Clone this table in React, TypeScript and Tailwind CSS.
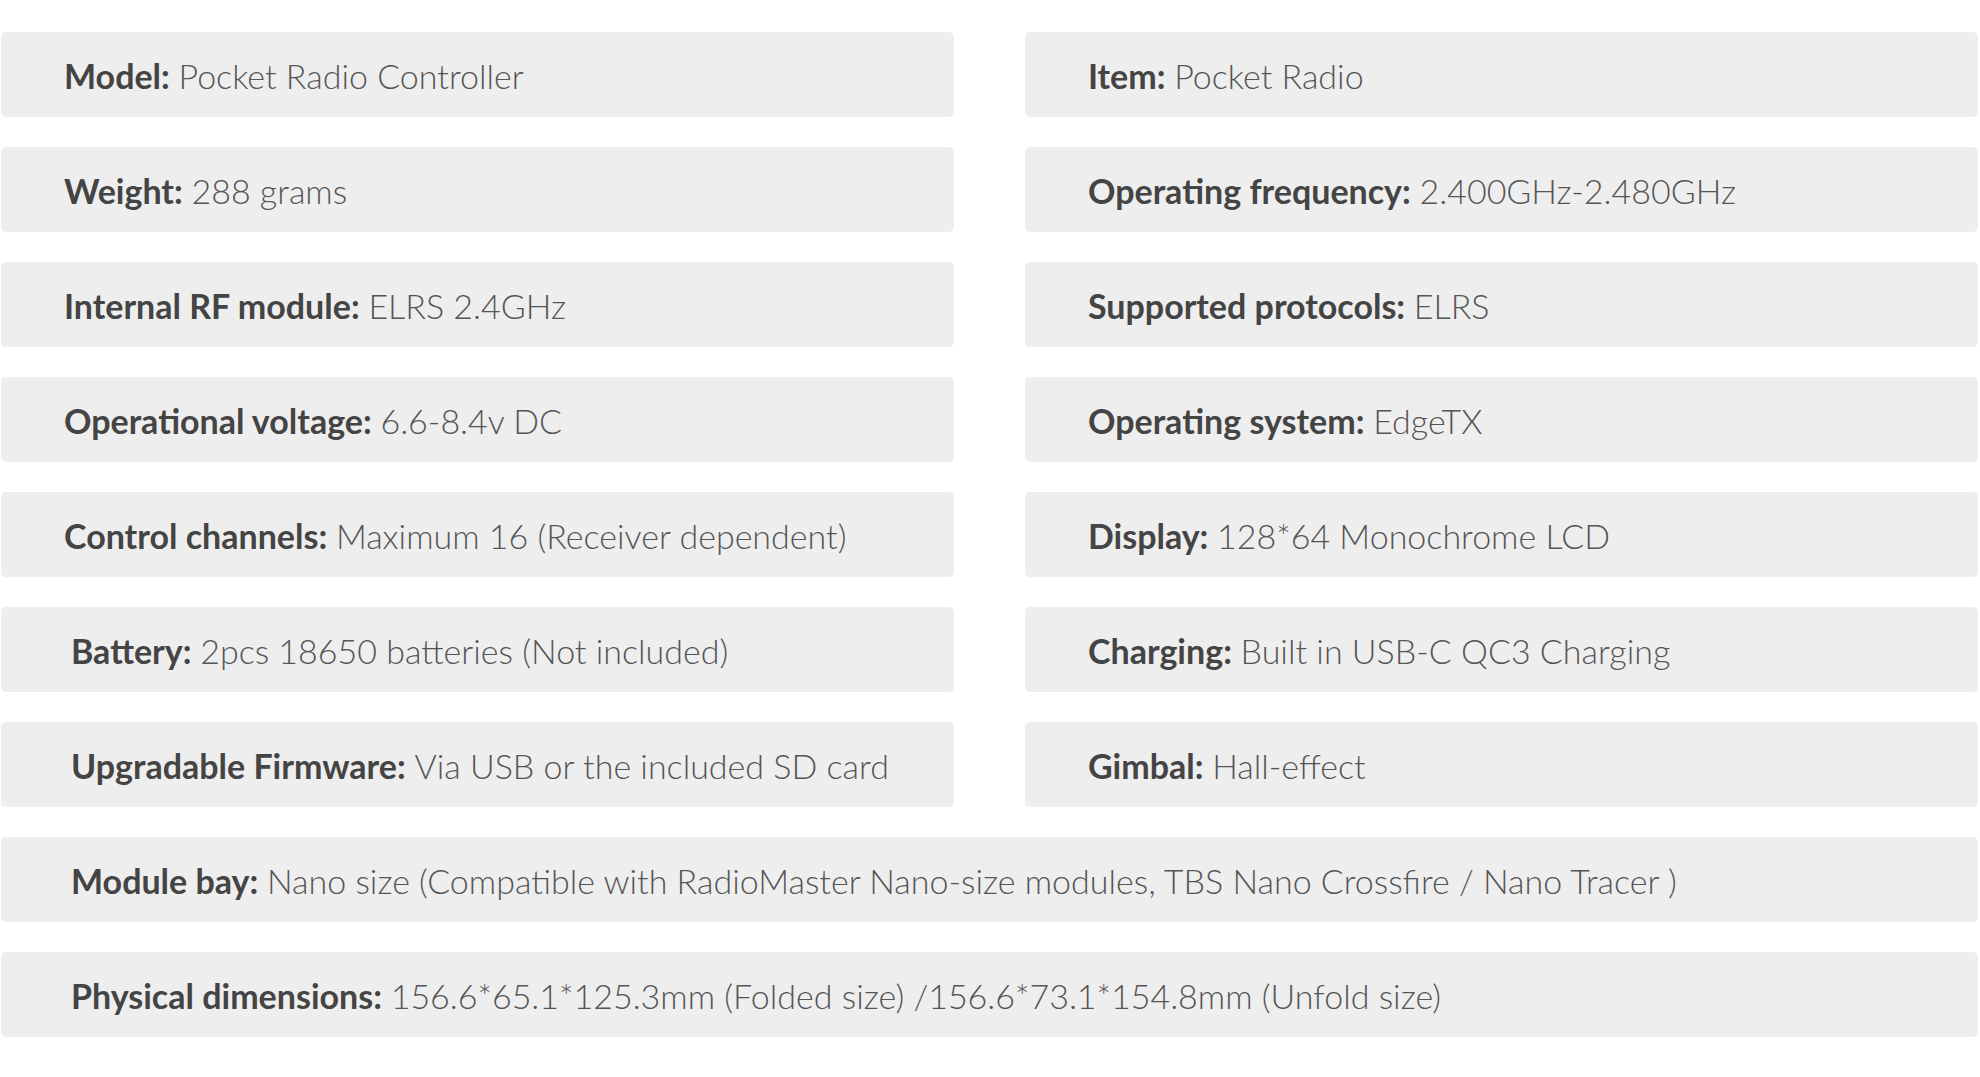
import React from "react";

type Spec = { label: string; value: string; indent?: boolean };

const rows: Array<[Spec, Spec] | [Spec]> = [
  [
    { label: "Model:", value: "Pocket Radio Controller" },
    { label: "Item:", value: "Pocket Radio" },
  ],
  [
    { label: "Weight:", value: "288 grams" },
    { label: "Operating frequency:", value: "2.400GHz-2.480GHz" },
  ],
  [
    { label: "Internal RF module:", value: "ELRS 2.4GHz" },
    { label: "Supported protocols:", value: "ELRS" },
  ],
  [
    { label: "Operational voltage:", value: "6.6-8.4v DC" },
    { label: "Operating system:", value: "EdgeTX" },
  ],
  [
    { label: "Control channels:", value: "Maximum 16 (Receiver dependent)" },
    { label: "Display:", value: "128*64 Monochrome LCD" },
  ],
  [
    { label: "Battery:", value: "2pcs 18650 batteries (Not included)", indent: true },
    { label: "Charging:", value: "Built in USB-C QC3 Charging" },
  ],
  [
    { label: "Upgradable Firmware:", value: "Via USB or the included SD card", indent: true },
    { label: "Gimbal:", value: "Hall-effect" },
  ],
  [
    {
      label: "Module bay:",
      value:
        "Nano size (Compatible with RadioMaster Nano-size modules, TBS Nano Crossfire / Nano Tracer )",
      indent: true,
    },
  ],
  [
    {
      label: "Physical dimensions:",
      value: "156.6*65.1*125.3mm (Folded size) /156.6*73.1*154.8mm (Unfold size)",
      indent: true,
    },
  ],
];

function Cell({ spec, full }: { spec: Spec; full?: boolean }) {
  return (
    <div
      className={
        "h-[85px] rounded-[5px] bg-[#eeeeee] flex items-center pt-[3px] " +
        (spec.indent ? "pl-[70px] " : "pl-[63px] ") +
        (full ? "col-span-2" : "")
      }
    >
      <p className="text-[34px] leading-none whitespace-nowrap">
        <span className="font-bold text-[#444444]">{spec.label}</span>{" "}
        <span className="font-light text-[#555555]">{spec.value}</span>
      </p>
    </div>
  );
}

export default function App() {
  return (
    <div
      className="w-[1980px] h-[1077px] bg-white pt-[32px] pl-[1px] pr-[2px]"
      style={{ fontFamily: "Lato, 'Open Sans', sans-serif" }}
    >
      <div className="grid grid-cols-2 gap-x-[71px] gap-y-[30px]">
        {rows.map((r, i) =>
          r.length === 2 ? (
            <React.Fragment key={i}>
              <Cell spec={r[0]} />
              <Cell spec={r[1]} />
            </React.Fragment>
          ) : (
            <Cell key={i} spec={r[0]} full />
          )
        )}
      </div>
    </div>
  );
}
